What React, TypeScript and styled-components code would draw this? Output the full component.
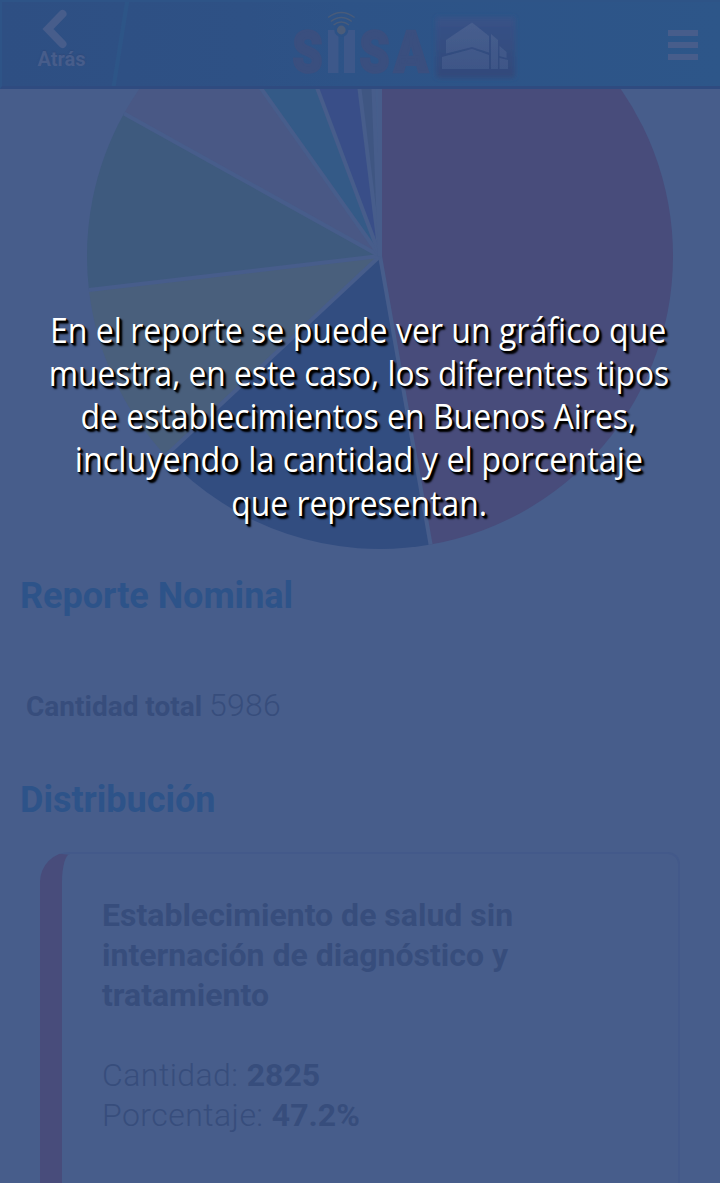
import React from "react";
import styled, { createGlobalStyle } from "styled-components";

const GlobalStyle = createGlobalStyle`
  * { box-sizing: border-box; }
  body { margin: 0; background: #475d8b; font-family: Roboto, sans-serif; }
`;

const Screen = styled.div`
  position: relative;
  width: 720px;
  height: 1183px;
  overflow: hidden;
  background: #475d8b;
  color: #374d7c;
`;

const Header = styled.header`
  display: grid;
  grid-template-columns: 122px 1fr 122px;
  height: 89px;
  border-top: 2px solid #2e5487;
  border-left: 2px solid #2e5487;
  border-bottom: 3px solid #2f4b80;
  background:
    linear-gradient(99deg, transparent 121px, #2d5587 122px, #2d5587 125px, transparent 126px),
    linear-gradient(90deg, #2e4f83, #2e5185 34%, #2d5387 48%, #2d5689);
`;

const BackButton = styled.div`
  display: flex;
  flex-direction: column;
  align-items: center;
  padding: 7px 3px 0 0;
  font-size: 20px;
  line-height: 20px;
  font-weight: 700;
  color: #475d8b;
  text-shadow: 0 -1px 1px #2f4a7c;
  svg { display: block; margin-right: 14px; }
`;

const Brand = styled.div`
  padding-left: 156px;
  svg { display: block; }
`;

const MenuButton = styled.div`
  display: flex;
  flex-direction: column;
  gap: 6px;
  padding: 28px 22px 0 0;
  align-items: flex-end;
`;

const MenuBar = styled.span`
  width: 30px;
  height: 6px;
  background: #475d8b;
`;

const ChartArea = styled.section`
  height: 461px;
  svg { display: block; }
`;

const SectionTitle = styled.h2<{ $top: number }>`
  margin: ${(p) => p.$top}px 0 0 20px;
  font-size: 36px;
  line-height: 44px;
  font-weight: 700;
  color: #2d5389;
`;

const Total = styled.p`
  margin: 65px 0 0 26px;
  font-size: 28px;
  line-height: 44px;
  font-weight: 700;
`;

const TotalValue = styled.span`
  font-size: 32px;
  font-weight: 300;
  letter-spacing: 0.2px;
`;

const Card = styled.article`
  width: 640px;
  height: 420px;
  margin: 30px 0 0 40px;
  padding: 41px 40px;
  border: 2px solid #43598a;
  border-left: 22px solid #484c7b;
  border-radius: 30px 12px 12px 30px;
  font-size: 32px;
  line-height: 40px;
  font-weight: 300;
`;

const CardTitle = styled.h3`
  width: 430px;
  margin: 0 0 40px;
  font: inherit;
  font-weight: 700;
`;

const Label = styled.span`
  letter-spacing: 0.45px;
`;

const Strong = styled.strong`
  font-weight: 700;
`;

const Caption = styled.div`
  position: absolute;
  top: 307.5px;
  left: 0;
  width: 720px;
  display: flex;
  flex-direction: column;
  align-items: center;
  font-family: "Open Sans", "Noto Sans", sans-serif;
  font-size: 34.5px;
  line-height: 43.3px;
  color: #fff;
  text-shadow: 1px 1px 1px #000, 2px 2px 1px #000, 3px 3px 2px #000;
`;

const CaptionLine = styled.span<{ $scale: number; $shift: number }>`
  white-space: nowrap;
  transform: translateX(${(p) => p.$shift}px) scaleX(${(p) => p.$scale});
`;

const CX = 380;
const CY = 167;
const R = 293;

// Each slice runs clockwise from one ray to the next; rays are offsets from the centre.
const rays: [number, number][] = [
  [0, -168],
  [50.5, 288],
  [-206, 192],
  [-291.5, 34],
  [-255, -142],
  [-118.5, -167],
  [-62.5, -167],
  [-20.5, -167],
  [-6.5, -167],
  [0, -168],
];
const sliceColors = ["#484c7b", "#324d80", "#495f7c", "#3e5a7e", "#495885", "#345a87", "#394e88", "#3f5682", "#465e8c"];

const onRim = ([dx, dy]: [number, number]) => {
  const k = R / Math.hypot(dx, dy);
  return `${(CX + dx * k).toFixed(2)} ${(CY + dy * k).toFixed(2)}`;
};

function PieChart() {
  return (
    <svg width="720" height="461" viewBox="0 0 720 461">
      {sliceColors.map((color, i) => (
        <path
          key={color}
          d={`M${CX} ${CY}L${onRim(rays[i])}A${R} ${R} 0 0 1 ${onRim(rays[i + 1])}Z`}
          fill={color}
        />
      ))}
      {rays.map((ray, i) => (
        <path key={i} d={`M${CX} ${CY}L${onRim(ray)}`} stroke="#475d8b" strokeWidth="4" />
      ))}
    </svg>
  );
}

function Logo() {
  return (
    <svg width="240" height="84" viewBox="280 2 240 84">
      <defs>
        <filter id="soft" x="-20%" y="-20%" width="140%" height="140%">
          <feGaussianBlur stdDeviation="2" />
        </filter>
        <filter id="edge" x="-10%" y="-10%" width="120%" height="120%">
          <feGaussianBlur stdDeviation="0.6" />
        </filter>
        <linearGradient id="wall" gradientUnits="userSpaceOnUse" x1="0" y1="22" x2="0" y2="69">
          <stop offset="0" stopColor="#475e8e" />
          <stop offset="1" stopColor="#3e5687" />
        </linearGradient>
        <linearGradient id="plate" x1="0" y1="0" x2="0" y2="1">
          <stop offset="0" stopColor="#385287" />
          <stop offset="1" stopColor="#30497b" />
        </linearGradient>
      </defs>
      <g fill="#3a4f7f" stroke="#3a4f7f" strokeWidth="2.5" fontFamily="Roboto, sans-serif" fontWeight="900" fontSize="58">
        <text x="292.5" y="72" textLength="30" lengthAdjust="spacingAndGlyphs">S</text>
        <text x="359.5" y="72" textLength="30" lengthAdjust="spacingAndGlyphs">S</text>
        <text x="394" y="72" textLength="34" lengthAdjust="spacingAndGlyphs">A</text>
      </g>
      <path d="M328 30h10.500v43h-10.500zM344 30h11v43h-11z" fill="#3d588a" />
      <circle cx="341.3" cy="30" r="7" fill="#2d5286" />
      <circle cx="341.3" cy="30" r="4.4" fill="#4b5c79" />
      <path d="M328 17.500Q341.300 7.500 354.600 17.500M330.800 21.500Q341.300 13.500 351.800 21.500M333.500 25Q341.300 19 349.100 25" fill="none" stroke="#485b7a" strokeWidth="1.4" />
      <rect x="436" y="17" width="79" height="61" rx="3" fill="url(#plate)" filter="url(#soft)" />
      <g fill="url(#wall)" filter="url(#edge)">
        <path d="M446 40 472 22.500 489 36v16.500L472 47l-26 6.500z" />
        <path d="M442 57l30-8 17 6v14h-47z" />
        <path d="M491 34l7 6v29h-7z" />
        <path d="M499.500 46l7 6v6l-7-2zM499.500 58l8.500 2v9h-8.500z" />
      </g>
    </svg>
  );
}

export default function App() {
  return (
    <Screen>
      <GlobalStyle />
      <Header>
        <BackButton>
          <svg width="26" height="40" viewBox="0 0 26 40">
            <path d="M20.500 5 6 20 20.500 35" fill="none" stroke="#475d8b" strokeWidth="8" strokeLinecap="round" />
          </svg>
          Atrás
        </BackButton>
        <Brand><Logo /></Brand>
        <MenuButton><MenuBar /><MenuBar /><MenuBar /></MenuButton>
      </Header>
      <ChartArea><PieChart /></ChartArea>
      <SectionTitle $top={24}>Reporte Nominal</SectionTitle>
      <Total>Cantidad total <TotalValue>5986</TotalValue></Total>
      <SectionTitle $top={49}>Distribución</SectionTitle>
      <Card>
        <CardTitle>Establecimiento de salud sin internación de diagnóstico y tratamiento</CardTitle>
        <div><Label>Cantidad: </Label><Strong>2825</Strong></div>
        <div><Label>Porcentaje: </Label><Strong>47.2%</Strong></div>
      </Card>
      <Caption>
        <CaptionLine $scale={0.929} $shift={-1.5}>En el reporte se puede ver un gráfico que</CaptionLine>
        <CaptionLine $scale={0.918} $shift={-1}>muestra, en este caso, los diferentes tipos</CaptionLine>
        <CaptionLine $scale={0.927} $shift={-1.5}>de establecimientos en Buenos Aires,</CaptionLine>
        <CaptionLine $scale={0.938} $shift={-1}>incluyendo la cantidad y el porcentaje</CaptionLine>
        <CaptionLine $scale={0.922} $shift={-0.5}>que representan.</CaptionLine>
      </Caption>
    </Screen>
  );
}
